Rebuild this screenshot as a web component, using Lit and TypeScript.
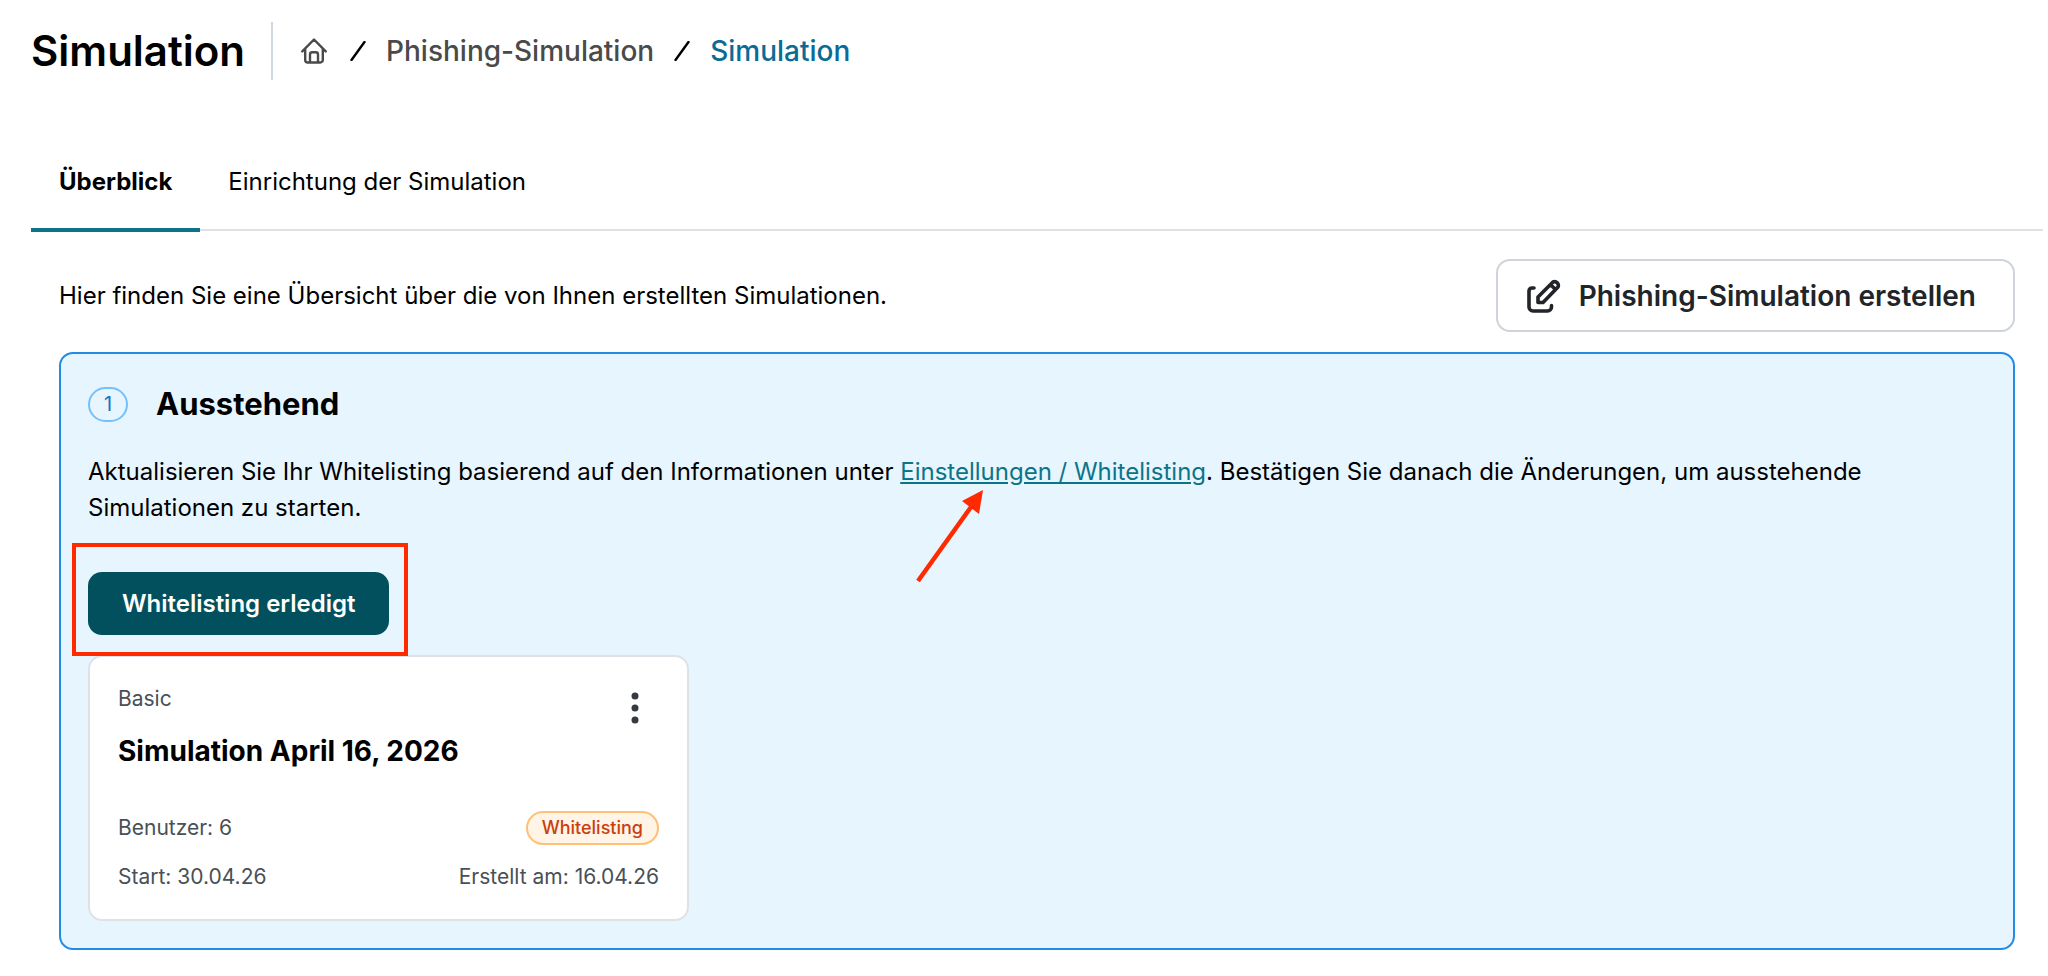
import { LitElement, html, css, svg } from "lit";
import { customElement, property } from "lit/decorators.js";

const slash = svg`<svg class="slash" viewBox="0 0 16 20" aria-hidden="true"><path d="M1.5 19 14.5 1" /></svg>`;

@customElement("page-header")
class PageHeader extends LitElement {
  static styles = css`
    :host { display: block; }
    .bar { display: flex; align-items: center; height: 58px; }
    h1 { margin: 0; font-size: 42px; line-height: 56px; font-weight: 600; padding-right: 26px; }
    .crumbs { display: flex; align-items: center; gap: 20px; align-self: stretch;
      border-left: 2px solid #d0d7de; padding-left: 28px; font-size: 28px; font-weight: 500; }
    a { color: #4a4a4a; text-decoration: none; }
    a[aria-current] { color: #0b6b94; }
    .home { display: flex; padding-right: 3px; }
    .home svg { width: 26px; height: 26px; fill: none; stroke: #4a4a4a; stroke-width: 2.4; stroke-linejoin: round; stroke-linecap: round; }
    .slash { width: 16px; height: 20px; fill: none; stroke: #000; stroke-width: 2.4; stroke-linecap: round; }
  `;
  render() {
    return html`<header class="bar">
      <h1>Simulation</h1>
      <nav class="crumbs" aria-label="Breadcrumb">
        <a class="home" href="#home" aria-label="Start">
          <svg viewBox="0 0 26 26"><path d="M1.3 13.4 13 1.5 24.7 13.400M4.200 11V22a2.500 2.500 0 0 0 2.500 2.500H19.300a2.500 2.500 0 0 0 2.500-2.500V11M9 24V16.500a2.200 2.200 0 0 1 2.200-2.200h3.600a2.200 2.200 0 0 1 2.200 2.200V24" /></svg>
        </a>
        ${slash}
        <a href="#phishing">Phishing-Simulation</a>
        ${slash}
        <a href="#simulation" aria-current="page">Simulation</a>
      </nav>
    </header>`;
  }
}

@customElement("simulation-card")
class SimulationCard extends LitElement {
  @property() kind = "";
  @property() name = "";
  @property() users = "";
  @property() start = "";
  @property() created = "";
  @property() status = "";
  static styles = css`
    :host { display: block; }
    .card { box-sizing: border-box; background: #fff; border: 2px solid #dee2e6; border-radius: 14px;
      padding: 26px 28px; color: #495057; font-size: 21px; line-height: 32px; }
    .row { display: flex; justify-content: space-between; align-items: center; }
    .top { align-items: flex-start; height: 48px; }
    .menu { border: 0; background: none; padding: 9px 20px 0; display: flex; cursor: pointer; }
    .menu svg { width: 8px; height: 32px; fill: #343a40; }
    h3 { margin: 0 0 40px; color: #000; font-size: 28px; line-height: 40px; font-weight: 700; }
    .badge { border: 2px solid #ffc078; background: #fff4e6; color: #c9400f; border-radius: 17px;
      font-size: 18px; line-height: 30px; padding: 0 14px; font-weight: 500; }
    .meta { display: grid; gap: 16px; }
  `;
  render() {
    return html`<article class="card">
      <div class="row top">
        <span>${this.kind}</span>
        <button class="menu" aria-label="Menü">
          <svg viewBox="0 0 8 32"><circle cx="4" cy="4" r="3.500" /><circle cx="4" cy="16" r="3.500" /><circle cx="4" cy="28" r="3.500" /></svg>
        </button>
      </div>
      <h3>${this.name}</h3>
      <div class="meta">
        <div class="row"><span>Benutzer: ${this.users}</span><span class="badge">${this.status}</span></div>
        <div class="row"><span>Start: ${this.start}</span><span>Erstellt am: ${this.created}</span></div>
      </div>
    </article>`;
  }
}

@customElement("app-root")
class AppRoot extends LitElement {
  static styles = css`
    :host { display: block; min-height: 100vh; box-sizing: border-box; background: #fff; color: #000;
      font-family: Inter, "Liberation Sans", sans-serif;
      font-size: 24px; line-height: 36px; padding: 22px 5px 26px 31px; }
    .tabs { display: flex; margin-top: 66px; border-bottom: 2px solid #dee2e6; }
    .tab { border: 0; border-bottom: 4px solid transparent; background: none; font: inherit; color: #000;
      padding: 18px 28px 28px; margin-bottom: -3px; cursor: pointer; }
    .tab[aria-selected="true"] { font-weight: 700; border-color: #0c7489; }
    .content { padding: 28px 28px 0; }
    .intro { display: flex; justify-content: space-between; align-items: center; }
    p { margin: 0; }
    .create { display: flex; align-items: center; gap: 18px; border: 2px solid #ced4da; border-radius: 14px; background: #fff;
      color: #212529; font-family: inherit; font-size: 28px; line-height: 40px; font-weight: 600; padding: 15px 37px 14px 29px; cursor: pointer; }
    .create svg { width: 34px; height: 34px; fill: none; stroke: #212529; stroke-width: 3.600; stroke-linecap: round; stroke-linejoin: round; }
    .panel { margin-top: 20px; border: 2px solid #228be6; border-radius: 14px; background: #e7f5ff; padding: 28px 27px 27px; }
    .heading { display: flex; align-items: center; gap: 28px; }
    .count { box-sizing: border-box; width: 40px; height: 35px; border: 2px solid #74c0fc; border-radius: 18px; color: #1971c2;
      font-size: 20px; line-height: 31px; text-align: center; }
    h2 { margin: 0; font-size: 31px; line-height: 44px; font-weight: 700; }
    .notice { margin-top: 28px; }
    .link { position: relative; }
    a { color: #0c7489; text-decoration: underline; }
    .arrow { position: absolute; left: 15px; top: 30px; width: 72px; height: 96px; pointer-events: none; }
    .action { position: relative; display: flex; width: max-content; margin: 46px 0 20px; }
    .done { border: 0; border-radius: 14px; background: #02505e; color: #fff; font-family: inherit; font-size: 24px; line-height: 36px;
      font-weight: 600; padding: 14px 34px 13px; cursor: pointer; }
    .frame { position: absolute; inset: -29px -19px -21px -16px; border: 4px solid #ff2a00; pointer-events: none; }
    .cards { display: grid; grid-template-columns: repeat(auto-fill, minmax(600px, 1fr)); }
    .cards > * { max-width: 601px; }
  `;
  render() {
    return html`<page-header></page-header>
      <div class="tabs" role="tablist">
        <button class="tab" role="tab" aria-selected="true">Überblick</button>
        <button class="tab" role="tab" aria-selected="false">Einrichtung der Simulation</button>
      </div>
      <main class="content">
        <div class="intro">
          <p>Hier finden Sie eine Übersicht über die von Ihnen erstellten Simulationen.</p>
          <button class="create">
            <svg viewBox="0 0 34 34" aria-hidden="true"><path d="M7 9H5a3 3 0 0 0-3 3V28a4 4 0 0 0 4 4H20.500a4 4 0 0 0 4-4V26.500M11 23.500v-5.500L26 3a3.800 3.800 0 0 1 5 5L16 23.500ZM23.500 5.500l5 5" /></svg>
            Phishing-Simulation erstellen
          </button>
        </div>
        <section class="panel">
          <div class="heading"><span class="count">1</span><h2>Ausstehend</h2></div>
          <p class="notice">Aktualisieren Sie Ihr Whitelisting basierend auf den Informationen unter
            <span class="link"><a href="#whitelisting">Einstellungen / Whitelisting</a><svg class="arrow" viewBox="0 0 72 96" aria-hidden="true"><path d="M3 94 56 20" stroke="#ff2a00" stroke-width="4.500" /><path d="M68 3 47 14 64 27Z" fill="#ff2a00" /></svg></span>. Bestätigen Sie danach die Änderungen, um ausstehende Simulationen zu starten.</p>
          <div class="action"><button class="done">Whitelisting erledigt</button><span class="frame"></span></div>
          <div class="cards">
            <simulation-card kind="Basic" name="Simulation April 16, 2026" users="6" start="30.04.26" created="16.04.26" status="Whitelisting"></simulation-card>
          </div>
        </section>
      </main>`;
  }
}
